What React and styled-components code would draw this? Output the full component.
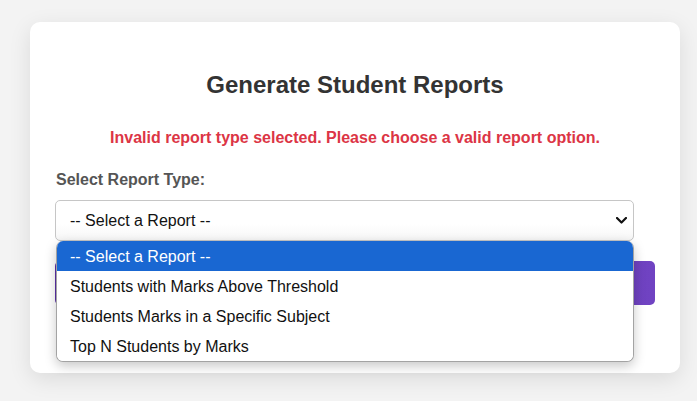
import React from "react";
import styled, { createGlobalStyle } from "styled-components";

const GlobalStyle = createGlobalStyle`
  html, body {
    margin: 0;
    padding: 0;
    background: #f3f3f3;
    font-family: "Liberation Sans", Arial, sans-serif;
  }
`;

const Page = styled.div`
  padding: 22px 0 28px 30px;
`;

const Card = styled.div`
  width: 650px;
  box-sizing: border-box;
  padding: 24px 25px 25px;
  background: #fff;
  border-radius: 10px;
  box-shadow: 0 6px 22px rgba(0, 0, 0, 0.1);
`;

const Title = styled.h2`
  margin: 25px 0 30px;
  font-size: 24px;
  line-height: 28px;
  font-weight: bold;
  color: #333;
  text-align: center;
`;

const ErrorText = styled.p`
  margin: 0 0 24px;
  font-size: 16px;
  line-height: 18px;
  font-weight: bold;
  color: #dc3545;
  text-align: center;
`;

const Label = styled.label`
  display: block;
  margin: 0 0 11px 1px;
  font-size: 16px;
  line-height: 18px;
  font-weight: bold;
  color: #555;
`;

const SelectWrap = styled.div`
  position: relative;
  width: 579px;
`;

const SelectBox = styled.div`
  height: 41px;
  box-sizing: border-box;
  display: flex;
  align-items: center;
  justify-content: space-between;
  padding: 0 6px 0 14px;
  border: 1px solid #c6c6c6;
  border-radius: 5px;
  background: linear-gradient(#fff 60%, #f6f6f6);
  font-size: 16px;
  color: #111;
`;

const Dropdown = styled.ul`
  position: absolute;
  top: 41px;
  left: 1px;
  right: 0;
  margin: 0;
  padding: 0;
  list-style: none;
  background: #fff;
  border: 1px solid #a3a3a3;
  border-top: none;
  border-radius: 7px;
  overflow: hidden;
  box-shadow: 0 4px 12px rgba(0, 0, 0, 0.22);
  z-index: 2;
`;

const Option = styled.li`
  height: 30px;
  display: flex;
  align-items: center;
  padding: 1px 0 0 13px;
  box-sizing: border-box;
  font-size: 16px;
  color: ${(p) => (p.$active ? "#fff" : "#111")};
  background: ${(p) => (p.$active ? "#1967d2" : "#fff")};
`;

const Button = styled.button`
  display: block;
  width: 600px;
  height: 44px;
  margin: 20px 0 43px;
  border: none;
  border-radius: 5px;
  background: linear-gradient(90deg, #5b2fa8, #7043c2);
  color: #fff;
  font-family: inherit;
  font-size: 16px;
  font-weight: bold;
`;

const Chevron = () => (
  <svg width="11" height="7" viewBox="0 0 11 7">
    <polyline
      points="1,1 5.5,5.5 10,1"
      fill="none"
      stroke="#111"
      strokeWidth="2.2"
      strokeLinecap="round"
      strokeLinejoin="round"
    />
  </svg>
);

const options = [
  "-- Select a Report --",
  "Students with Marks Above Threshold",
  "Students Marks in a Specific Subject",
  "Top N Students by Marks",
];

export default function App() {
  return (
    <Page>
      <GlobalStyle />
      <Card>
        <Title>Generate Student Reports</Title>
        <ErrorText>
          Invalid report type selected. Please choose a valid report option.
        </ErrorText>
        <Label>Select Report Type:</Label>
        <SelectWrap>
          <SelectBox>
            <span>-- Select a Report --</span>
            <Chevron />
          </SelectBox>
          <Dropdown>
            {options.map((o, i) => (
              <Option key={o} $active={i === 0}>
                {o}
              </Option>
            ))}
          </Dropdown>
        </SelectWrap>
        <Button>Generate Report</Button>
      </Card>
    </Page>
  );
}
